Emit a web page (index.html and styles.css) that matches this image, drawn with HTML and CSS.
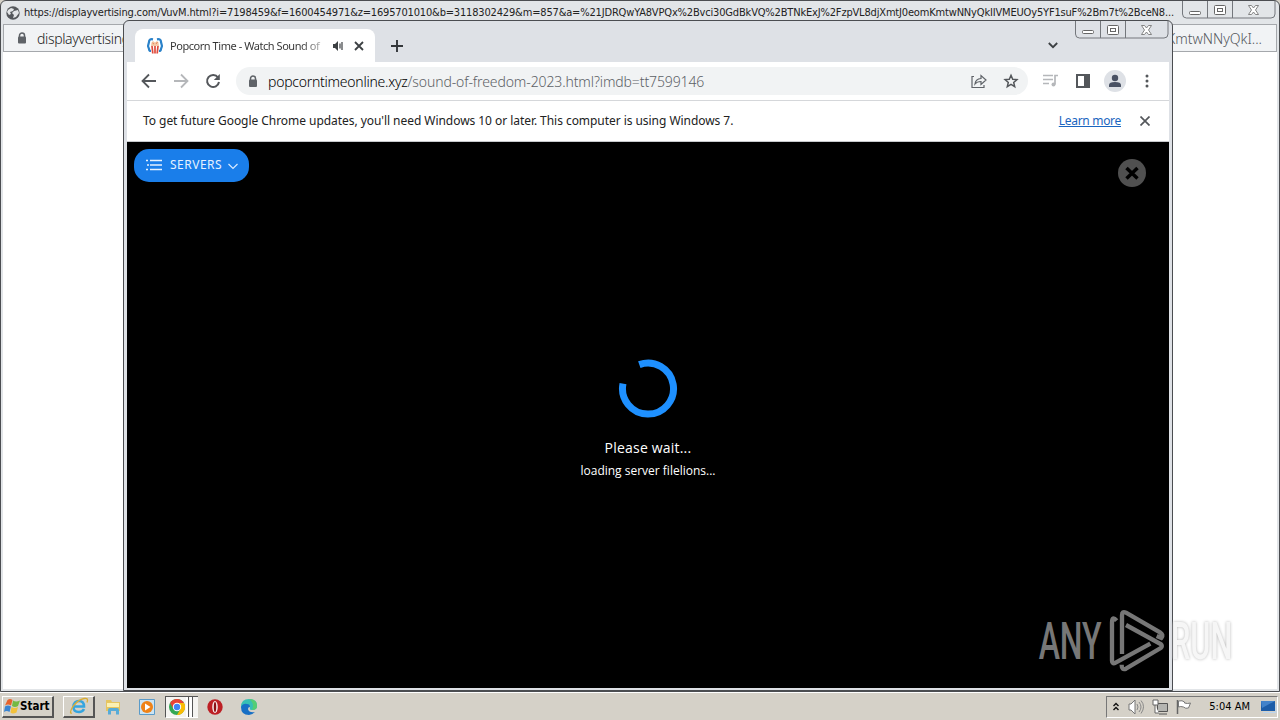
FILE: index.html
```
<!DOCTYPE html>
<html lang="en">
<head>
<meta charset="utf-8">
<title>Desktop</title>
<link rel="stylesheet" href="styles.css">
</head>
<body>
<div class="desktop">

  <div class="window back">
    <div class="caption">
      <svg class="globe" width="14" height="14" viewBox="0 0 14 14"><circle cx="7" cy="7" r="6.7" fill="#55585c"/><path d="M2 4l3-2 3 1-1 2-3 1 1 2-2 1-2-3zM8 5l4-1 1 3-3 4-3 1 1-3-2-2z" fill="#e4e6e8"/></svg>
      <span class="url-title">https://displayvertising.com/VuvM.html?i=7198459&amp;f=1600454971&amp;z=1695701010&amp;b=3118302429&amp;m=857&amp;a=%21JDRQwYA8VPQx%2Bvci30GdBkVQ%2BTNkExJ%2FzpVL8djXmtJ0eomKmtwNNyQkIIVMEUOy5YF1suF%2Bm7t%2BceN8...</span>
    </div>
    <div class="back-address">
      <svg width="10" height="13" viewBox="0 0 10 13"><path d="M2.500 5V3.500a2.500 2.500 0 0 1 5 0V5" fill="none" stroke="#5f6368" stroke-width="1.500"/><rect x="1" y="4.500" width="8" height="7" rx="1" fill="#5f6368"/></svg>
      <span class="host">displayvertising</span>
      <span class="tail">KmtwNNyQkI...</span>
    </div>
    <div class="blank"></div>
    <div class="controls">
      <svg width="94" height="18" viewBox="0 0 94 18"><path d="M.5 0V13q0 4 4 4H89q4 0 4-4V0M25.500 0V17M50.500 0V17" fill="none" stroke="#74777c"/><rect x="7.500" y="10.500" width="11" height="3" rx="1" fill="#fff" stroke="#666"/><rect x="32.500" y="4.500" width="11" height="9" rx="1" fill="#fff" stroke="#666"/><rect x="35.500" y="7.500" width="5" height="3" fill="#fff" stroke="#666"/><path d="M66.500 4.500h3l2 2.500 2-2.500h3l-3 4.500 3 4.500h-3l-2-2.500-2 2.500h-3l3-4.500z" fill="#fff" stroke="#777" stroke-width=".9"/></svg>
    </div>
  </div>

  <div class="window front">
    <div class="tabs">
      <div class="tab">
        <svg class="favicon" width="16" height="16" viewBox="0 0 16 16"><path d="M6 1.300Q2 .5 2 4L1 8l1 3q0 2 2 2M10 1.300q4-.8 4 2.700l1 4-1 3q0 2-2 2" fill="none" stroke="#2b82c9" stroke-width="2.200"/><path d="M4 8l.5-3.500 1.500-1.500 2 1.500 2-1.500 1.500 1.500L12 8z" fill="#f4c8a5"/><path d="M5 8l.8 7.500M8 8v7.500M11 8l-.8 7.500" stroke="#df4b3c" stroke-width="1.700"/><path d="M5.500 5l1.500 1M9 6l1.500-2" stroke="#e98157"/></svg>
        <span class="tab-title">Popcorn Time - Watch Sound of</span>
        <svg width="12" height="12" viewBox="0 0 12 12"><path d="M1 4h2l3-3v10L3 8H1z" fill="#3c4043"/><path d="M8 3.500v5M10 2v8" stroke="#3c4043" stroke-width="1.200"/></svg>
        <svg class="tab-close" width="10" height="10" viewBox="0 0 10 10"><path d="M1 1l8 8M9 1L1 9" stroke="#3c4043" stroke-width="1.800"/></svg>
      </div>
      <svg class="plus" width="12" height="12" viewBox="0 0 12 12"><path d="M6 0v12M0 6h12" stroke="#33363a" stroke-width="1.900"/></svg>
      <svg class="tab-search" width="10" height="7" viewBox="0 0 10 7"><path d="M.8 1L5 5.200 9.200 1" fill="none" stroke="#3c4043" stroke-width="1.800"/></svg>
    </div>

    <div class="toolbar">
      <svg width="16" height="16" viewBox="0 0 16 16"><path d="M15 8H2M8 1.500L1.500 8 8 14.500" fill="none" stroke="#54575b" stroke-width="1.800"/></svg>
      <svg width="16" height="16" viewBox="0 0 16 16"><path d="M1 8h13M8 1.500L14.500 8 8 14.500" fill="none" stroke="#b5b7ba" stroke-width="1.800"/></svg>
      <svg width="16" height="16" viewBox="0 0 16 16"><path d="M13 4.500A6 6 0 1 0 14 9" fill="none" stroke="#54575b" stroke-width="2"/><path d="M14.800 1v6H8.800z" fill="#54575b"/></svg>
      <div class="omnibox">
        <svg width="10" height="13" viewBox="0 0 10 13"><path d="M2.500 5V3.500a2.500 2.500 0 0 1 5 0V5" fill="none" stroke="#5f6368" stroke-width="1.500"/><rect x="1" y="4.500" width="8" height="7.500" rx="1" fill="#5f6368"/></svg>
        <span class="address"><b>popcorntimeonline.xyz</b>/sound-of-freedom-2023.html?imdb=tt7599146</span>
        <svg class="share" width="16" height="16" viewBox="0 0 16 16"><path d="M3 3.500H1v11h12V12M4 11q.5-5 6-5.500V2.500L15 7l-5 4.500V8.500Q6 8.500 4 11z" fill="none" stroke="#5f6368" stroke-width="1.200"/></svg>
        <svg width="16" height="16" viewBox="0 0 16 16"><path d="M8 2.300l1.700 3.900 4.200.4-3.200 2.800 1 4.200L8 11.400l-3.700 2.200 1-4.200-3.200-2.800 4.200-.4z" fill="none" stroke="#54575b" stroke-width="1.500"/></svg>
      </div>
      <div class="actions">
        <svg width="17" height="16" viewBox="0 0 17 16"><path d="M1 2.500h10M1 6.500h10M1 10.500h6M16 2.500h-3v9" fill="none" stroke="#b5b7ba" stroke-width="1.700"/><circle cx="11.500" cy="11.500" r="2" fill="#b5b7ba"/></svg>
        <svg width="16" height="16" viewBox="0 0 16 16"><path d="M2 2h12v12H2z" fill="#fff" stroke="#54575b" stroke-width="2"/><path d="M9 2h5v12H9z" fill="#54575b"/></svg>
        <svg class="avatar" width="22" height="22" viewBox="0 0 22 22"><circle cx="11" cy="11" r="11" fill="#dee1e6"/><circle cx="11" cy="8" r="3.200" fill="#4a5264"/><path d="M5 17v-2q0-3 6-3t6 3v2z" fill="#4a5264"/></svg>
        <svg class="dots" width="4" height="14" viewBox="0 0 4 14"><circle cx="2" cy="2" r="1.500"/><circle cx="2" cy="7" r="1.500"/><circle cx="2" cy="12" r="1.500"/></svg>
      </div>
    </div>

    <div class="infobar">
      <span class="notice">To get future Google Chrome updates, you'll need Windows 10 or later. This computer is using Windows 7.</span>
      <span class="learn">Learn more</span>
      <svg width="10" height="10" viewBox="0 0 10 10"><path d="M.5.5l9 9M9.500.5l-9 9" stroke="#54575b" stroke-width="1.700"/></svg>
    </div>

    <div class="page">
      <div class="page-top">
        <div class="servers">
          <svg width="16" height="12" viewBox="0 0 16 12"><path d="M4 1.500h12M4 6h12M4 10.500h12M0 1.500h2M1 6h2M0 10.500h2" stroke="#e5f1ff" stroke-width="1.300"/></svg>
          <span>SERVERS</span>
          <svg class="down" width="10" height="7" viewBox="0 0 10 7"><path d="M.5 1L5 5.500 9.500 1" fill="none" stroke="#d9eaff" stroke-width="1.200"/></svg>
        </div>
        <svg class="close" width="28" height="28" viewBox="0 0 28 28"><circle cx="14" cy="14" r="14" fill="#505050"/><path d="M8.500 9l11 10.500M19.500 9l-11 10.500" stroke="#000" stroke-width="3.500"/></svg>
      </div>
      <div class="loading">
        <svg width="60" height="60" viewBox="0 0 60 60"><path d="M21.300 5.600A25.500 25.500 0 1 1 5 24.600" fill="none" stroke="#1e90ff" stroke-width="7"/></svg>
        <div class="wait">Please wait...</div>
        <div class="server">loading server filelions...</div>
      </div>
    </div>
    <div class="controls">
      <svg width="94" height="18" viewBox="0 0 94 18"><path d="M.5 0V13q0 4 4 4H89q4 0 4-4V0M25.500 0V17M50.500 0V17" fill="none" stroke="#74777c"/><rect x="7.500" y="9.500" width="11" height="3" rx="1" fill="#fff" stroke="#666"/><rect x="32.500" y="4.500" width="11" height="9" rx="1" fill="#fff" stroke="#666"/><rect x="35.500" y="7.500" width="5" height="3" fill="#fff" stroke="#666"/><path d="M66.500 4.500h3l2 2.500 2-2.500h3l-3 4.500 3 4.500h-3l-2-2.500-2 2.500h-3l3-4.500z" fill="#fff" stroke="#777" stroke-width=".9"/></svg>
    </div>
  </div>

  <svg class="watermark" width="260" height="110" viewBox="0 0 780 330">
    <g class="letters">
      <text x="56" y="208" textLength="189" lengthAdjust="spacingAndGlyphs" fill="#777">ANY</text>
      <text class="run" x="453" y="208" textLength="184" lengthAdjust="spacingAndGlyphs">RUN</text>
    </g>
    <path d="M290 92Q276 76 276 98V212Q276 224 287 218L391 161M306 192V76Q306 62 318 68L420 127Q432 135 424 144L410 138M318 105L422 162Q429 168 422 174L318 236Q305 242 305 224" fill="none" stroke="#777" stroke-width="13"/>
  </svg>

  <div class="taskbar">
    <div class="start">
      <svg width="16" height="16" viewBox="0 0 16 16"><path d="M3.500 2q2.500-2 5 0L7 7.500q-3-2-6 0z" fill="#e6622c"/><path d="M9 2.500q3 2 7 0L14 8q-3 2-6 0z" fill="#74b943"/><path d="M1 8.500q3-2 6 0L5.500 14q-3-2-5.500 0z" fill="#3984d2"/><path d="M7.500 9q3 2 6.500 0l-1.500 5.500q-4 2-6 0z" fill="#f2c13c"/></svg>
      <b>Start</b>
    </div>
    <div class="task raised">
      <svg width="20" height="18" viewBox="0 0 20 18"><path d="M5 9.500h10Q15 4 10 4T4.500 9.500 10 15q3.500 0 5-3" fill="none" stroke="#35a5df" stroke-width="2.600"/><path d="M3 16Q0 17 3 11 8 3 15 1.500q5-1 3 4" fill="none" stroke="#d9ad35" stroke-width="1.300"/></svg>
    </div>
    <div class="task">
      <svg width="18" height="16" viewBox="0 0 18 16"><path d="M2 1h5l1 2h8v9H2z" fill="#e6c561"/><path d="M3 4h12v4H3z" fill="#fbf0b3"/><path d="M4 15.500V11q0-2 2-2h7q2 0 2 2v4.500h-3V12H7v3.500z" fill="#57abd8"/></svg>
    </div>
    <div class="task">
      <svg width="16" height="16" viewBox="0 0 16 16"><path d="M.5.5h15v15H.5z" fill="#cce4f3" stroke="#5a9bc9"/><circle cx="8" cy="8" r="6" fill="#ef8217"/><path d="M6 4.500v7L11.500 8z" fill="#fff"/></svg>
    </div>
    <div class="task pressed">
      <svg width="16" height="16" viewBox="0 0 16 16"><circle cx="8" cy="8" r="8" fill="#34a853"/><path d="M1.100 4A8 8 0 0 1 15 4H8L4.500 10z" fill="#ea4335"/><path d="M15 4A8 8 0 0 1 8 16l3.500-6L8 4z" fill="#fbbc04"/><circle cx="8" cy="8" r="4.200" fill="#fff"/><circle cx="8" cy="8" r="3.200" fill="#4285f4"/></svg>
      <i></i><i></i>
    </div>
    <div class="task">
      <svg width="16" height="16" viewBox="0 0 16 16"><circle cx="8" cy="8" r="7.700" fill="#bd1f24"/><ellipse cx="8" cy="8" rx="2.800" ry="6" fill="#f6e8e8"/><ellipse cx="8" cy="8" rx="1.200" ry="5" fill="#8c1014"/></svg>
    </div>
    <div class="task">
      <svg width="16" height="16" viewBox="0 0 16 16"><path d="M0 8Q0 0 8 0t8 7q0 4-5 4-3 0-2-2Q9 6 6 6 2 6 0 9z" fill="#37bfb5"/><path d="M0 8q2-4 6-3 3 0 3 3-2 0-2 2 1 4 7 3-3 3-6 3Q0 16 0 8z" fill="#176fc5"/><path d="M8 0q8 0 8 7 0 4-5 4Q14 4 8 0z" fill="#55cd74"/></svg>
    </div>
    <div class="tray">
      <svg width="8" height="10" viewBox="0 0 8 10"><path d="M1.500 4L4 1.500 6.500 4M1.500 8L4 5.500 6.500 8" fill="none" stroke="#111" stroke-width="1.400"/></svg>
      <svg width="16" height="16" viewBox="0 0 16 16"><path d="M1 5h2l4-4v14l-4-4H1z" fill="#fff" stroke="#777"/><path d="M9 5q2 3 0 6M11 3q4 5 0 10M13 1.500q5 6 0 13" fill="none" stroke="#888"/></svg>
      <svg width="16" height="16" viewBox="0 0 16 16"><path d="M5.500 4.500h10v8h-10zM7 15h8" fill="#b5b5b1" stroke="#555"/><path d="M1 1h5v5H1zM3 6v8h4" fill="#fff" stroke="#666"/></svg>
      <svg width="16" height="16" viewBox="0 0 16 16"><path d="M1.500 1v14" stroke="#666" stroke-width="1.500"/><path d="M2.500 2q4-1 6 1v1q3 1 6 0l-2 5q-3 1-5-1-3-1-5 0z" fill="#fff" stroke="#777"/></svg>
      <span class="clock">5:04 AM</span>
      <svg class="show" width="16" height="14" viewBox="0 0 16 14"><path d="M0 1h14v10H0z" fill="#1d5da8"/><path d="M0 1h14L1 8z" fill="#4383ca"/><path d="M2 12.500h13V4" fill="none" stroke="#bcd5ee"/></svg>
    </div>
  </div>
</div>
</body>
</html>
```
FILE: styles.css
```
* {
  box-sizing: border-box;
}
body {
  margin: 0;
  overflow: hidden;
  font-family: "Noto Sans", "Open Sans", sans-serif;
  color: #222;
}
svg {
  display: block;
  flex: none;
}
span {
  white-space: nowrap;
}
.desktop {
  position: relative;
  width: 1280px;
  height: 720px;
  display: flex;
  flex-direction: column;
  justify-content: flex-end;
  background: #d5d1c8;
}
.window {
  position: absolute;
  display: flex;
  flex-direction: column;
  border: 1px solid #4b4d51;
  border-radius: 6px 6px 0 0;
}

/* popup behind the main window */
.back {
  left: 0;
  top: 0;
  width: 1280px;
  height: 692px;
  padding: 0 2px 2px;
  background: #e2e5e8;
}
.caption {
  display: flex;
  align-items: center;
  height: 23px;
  padding-left: 3px;
  gap: 4px;
}
.url-title {
  font-family: "DejaVu Sans Condensed", "DejaVu Sans", sans-serif;
  font-stretch: condensed;
  font-size: 11px;
  letter-spacing: -.17px;
}
.back-address {
  display: flex;
  align-items: center;
  height: 28px;
  border: 1px solid #a5a8ac;
  background: #f1f3f5;
  padding: 0 14px 0 13px;
  font-size: 14px;
  font-weight: 300;
}
.host {
  margin-left: 10px;
  letter-spacing: -.35px;
}
.tail {
  margin-left: auto;
  color: #55595d;
}
.blank {
  flex: 1;
  background: #fff;
}
.controls {
  position: absolute;
  right: 3px;
  top: 0;
}

/* browser window */
.front {
  left: 123px;
  top: 20px;
  width: 1050px;
  height: 671px;
  padding: 0 3px 2px 3px;
  background: #dee1e6;
}
.tabs {
  display: flex;
  align-items: center;
  height: 41px;
  flex: none;
  padding: 8px 0 0 8px;
}
.tab {
  display: flex;
  align-items: center;
  width: 240px;
  height: 33px;
  padding: 0 11px 0 12px;
  border-radius: 8px 8px 0 0;
  background: #fff;
}
.tab-title {
  width: 152px;
  margin: 0 10px 0 7px;
  font-size: 11px;
  letter-spacing: -.45px;
  color: transparent;
  background: linear-gradient(90deg, #333 86%, #bbb);
  background-clip: text;
  -webkit-background-clip: text;
}
.tab-close {
  margin-left: auto;
}
.plus {
  margin-left: 16px;
}
.tab-search {
  margin: 0 111px 0 auto;
}
.toolbar {
  display: flex;
  align-items: center;
  height: 39px;
  flex: none;
  padding: 0 20px 0 14px;
  gap: 16px;
  border-bottom: 1px solid #d5d7da;
  background: #fff;
}
.omnibox {
  display: flex;
  align-items: center;
  width: 792px;
  height: 28px;
  padding: 0 9px 0 12px;
  margin-left: -1px;
  border-radius: 14px;
  background: #f1f3f4;
}
.address {
  margin-left: 10px;
  font-size: 14px;
  font-weight: 300;
  letter-spacing: -.11px;
  color: #5c6166;
}
.address b {
  font-weight: 300;
  letter-spacing: -.25px;
  color: #000;
}
.share {
  margin: 0 16px 0 auto;
}
.actions {
  display: flex;
  align-items: center;
  gap: 16px;
  margin-left: -2px;
  fill: #54575b;
}
.avatar {
  margin-left: -3px;
}
.dots {
  margin-left: 3px;
}
.infobar {
  display: flex;
  align-items: center;
  height: 41px;
  flex: none;
  padding: 0 19px 0 16px;
  border-bottom: 1px solid #c7c9cc;
  background: #fff;
  font-size: 12px;
}
.notice {
  padding-bottom: 2px;
  letter-spacing: -.05px;
}
.learn {
  margin: 0 19px 0 auto;
  padding-bottom: 2px;
  letter-spacing: -.3px;
  color: #1a65c0;
  text-decoration: underline;
}
.page {
  flex: 1;
  background: #000;
  color: #fff;
}
.page-top {
  display: flex;
  justify-content: space-between;
  padding: 7px 23px 0 7px;
}
.servers {
  display: flex;
  align-items: center;
  width: 115px;
  height: 33px;
  padding: 0 11px 2px 12px;
  border-radius: 15px;
  background: #1a7eea;
  color: #e5f1ff;
  font-size: 12px;
}
.servers span {
  margin-left: 8px;
  letter-spacing: .5px;
}
.down {
  margin: 3px 0 0 auto;
}
.close {
  margin-top: 10px;
}
.loading {
  display: flex;
  flex-direction: column;
  align-items: center;
  padding-top: 172px;
}
.wait {
  margin-top: 19px;
  font: 14px/20px "Open Sans", sans-serif;
  letter-spacing: .2px;
}
.server {
  margin-top: 4px;
  font: 12px/18px "Open Sans", sans-serif;
}

.watermark {
  position: absolute;
  left: 1020px;
  top: 590px;
}
.letters {
  font: 500 155px Roboto, sans-serif;
}
.run {
  fill: #f6f6f6;
  filter: drop-shadow(0 0 5px #b8b8b8);
}

.taskbar {
  display: flex;
  align-items: center;
  height: 28px;
  padding: 0 0 0 2px;
  border-top: 1px solid #fff;
  background: #d5d1c8;
  font: 11px "DejaVu Sans Condensed", "DejaVu Sans", sans-serif;
  color: #000;
}
.start, .raised {
  border: 1px solid #fff;
  border-right: 2px solid #555;
  border-bottom: 2px solid #555;
}
.start {
  display: flex;
  align-items: center;
  width: 52px;
  height: 22px;
  margin-right: 9px;
  padding-left: 1px;
}
.start b {
  font-size: 11.5px;
}
.task {
  display: flex;
  align-items: center;
  justify-content: center;
  width: 34px;
  height: 22px;
}
.raised {
  width: 32px;
  margin-right: 1px;
}
.pressed {
  justify-content: flex-start;
  width: 33px;
  margin-left: 1px;
  padding-left: 3px;
  border: 1px solid #555;
  border-right: 0;
  border-bottom-color: #fff;
  background: #f5f4f1;
}
.pressed i {
  width: 3px;
  height: 20px;
  margin-left: 1px;
  border-right: 1px solid #555;
  background: #fff;
}
.tray {
  display: flex;
  align-items: center;
  width: 172px;
  height: 22px;
  margin-left: auto;
  margin-right: 2px;
  padding: 0 0 0 5px;
  gap: 8px;
  border: 1px solid #777;
  border-right-color: #fff;
  border-bottom-color: #fff;
}
.clock {
  margin-left: auto;
  margin-right: 3px;
}
```
